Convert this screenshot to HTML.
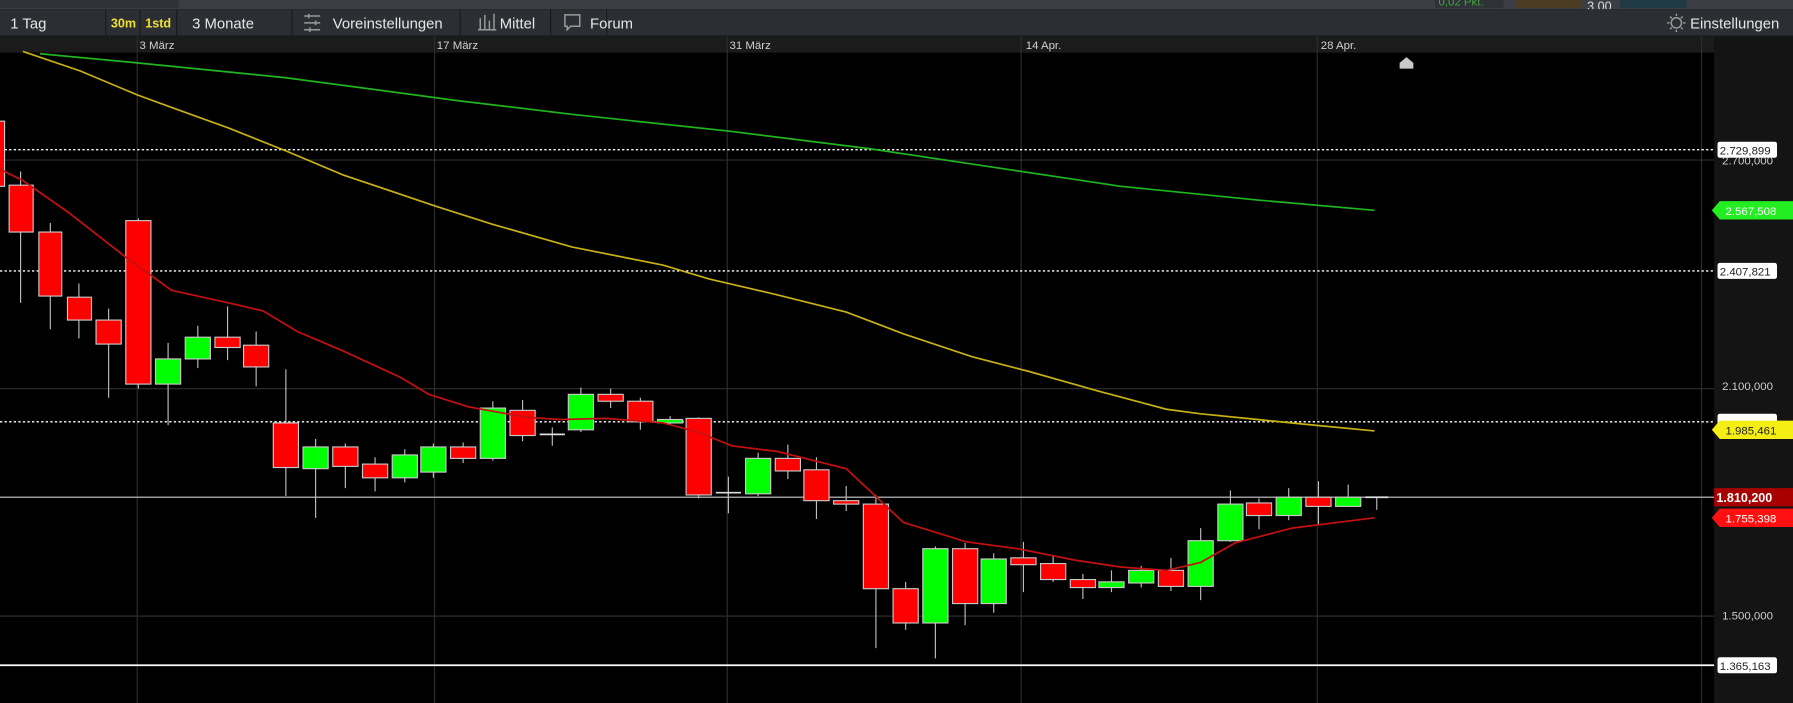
<!DOCTYPE html>
<html><head><meta charset="utf-8"><style>
html,body{margin:0;padding:0;background:#000;overflow:hidden}
svg{display:block}
text{font-family:"Liberation Sans",sans-serif}
</style></head><body>
<svg width="1793" height="703" viewBox="0 0 1568 615" preserveAspectRatio="none" xmlns="http://www.w3.org/2000/svg">
<rect x="0" y="0" width="1568" height="615" fill="#000"/>
<rect x="0" y="0" width="1568" height="8" fill="#3b3f45"/>
<rect x="0" y="0" width="156" height="7" fill="#2f3237"/>
<rect x="1255" y="0" width="60" height="7" fill="#2f3237"/>
<text x="1258" y="5" font-size="10" fill="#3ea83e">0,02 Pkt.</text>
<rect x="1325" y="0" width="58" height="7" fill="#4b3c24"/>
<text x="1388" y="9" font-size="11" fill="#ddd">3,00</text>
<rect x="1417" y="0" width="58" height="7" fill="#1f3a44"/>
<rect x="0" y="8" width="1568" height="24" fill="#2b2e32"/>
<rect x="0" y="31" width="1568" height="1" fill="#1a1b1d"/>
<g fill="#1a1b1d">
<rect x="92" y="8" width="1" height="23"/><rect x="122" y="8" width="1" height="23"/><rect x="154" y="8" width="1" height="23"/>
<rect x="255" y="8" width="1" height="23"/><rect x="402" y="8" width="1" height="23"/><rect x="481" y="8" width="1" height="23"/><rect x="530" y="8" width="1" height="23"/>
</g>
<g font-size="13" fill="#e6e6e6">
<text x="9" y="25">1 Tag</text>
<text x="97" y="24" font-size="11" font-weight="bold" fill="#f0e030">30m</text>
<text x="127" y="24" font-size="11" font-weight="bold" fill="#f0e030">1std</text>
<text x="168" y="25">3 Monate</text>
<text x="291" y="25">Voreinstellungen</text>
<text x="437" y="25">Mittel</text>
<text x="516" y="25">Forum</text>
<text x="1478" y="25">Einstellungen</text>
</g>
<g stroke="#9a9a9a" stroke-width="1.3" fill="none">
<path d="M266 14h14M266 20h14M266 26h14M270 12v4M276 18v4M271 24v4"/>
<path d="M420 16v10M424 13v13M428 18v8M432 12v14M418 26h16"/>
<path d="M494 13h13v10h-8l-3 3v-3h-2z"/>
<circle cx="1466" cy="20" r="4.5"/>
<path d="M1466 12v2M1466 26v2M1458 20h2M1472 20h2M1460.5 14.5l1.5 1.5M1470 24l1.5 1.5M1471.5 14.5l-1.5 1.5M1462 24l-1.5 1.5"/>
</g>
<rect x="0" y="32" width="1568" height="14" fill="#1b1b1b"/>
<g font-size="10" fill="#d0d0d0">
<text x="122" y="43">3 März</text><text x="382" y="43">17 März</text><text x="638" y="43">31 März</text><text x="897" y="43">14 Apr.</text><text x="1155" y="43">28 Apr.</text>
</g>
<rect x="1499" y="32" width="69" height="583" fill="#141414"/>
<g stroke="#2e2e2e" stroke-width="1">
<path d="M120 32V615M380 32V615M636 32V615M893 32V615M1152 32V615M1488 32V615"/>
<path d="M0 140H1499M0 340H1499M0 539H1499"/>
</g>
<path d="M1224 60v-5l6-5 6 5v5z" fill="#c8c8c8"/>
<g stroke="#fff" stroke-width="1.2" stroke-dasharray="2,2">
<path d="M0 131H1499M0 237H1499M0 369H1499"/>
</g>
<path d="M0 435H1499" stroke="#9a9a9a" stroke-width="1.3"/>
<path d="M0 582H1499" stroke="#fff" stroke-width="1.5"/>
<polyline fill="none" stroke="#1fb51f" stroke-width="1.5" points="35,47 120,55 250,68 400,88 500,100 640,115 760,130 880,148 980,163 1100,175 1202,184"/>
<polyline fill="none" stroke="#c8b015" stroke-width="1.5" points="20,45 70,62 120,83 150,94 200,112 250,132 300,153 380,180 430,196 500,216 580,232 620,244 680,258 740,273 790,292 850,312 900,325 960,342 1020,358 1050,362 1090,366 1140,371 1202,377"/>
<g stroke="#bdbdbd" stroke-width="1">
<path d="M-3 90V170M18 150V265M44 195V288M69 248V296M95 270V348M121 191V340M147 300V372M173 285V322M199 268V315M224 290V338M250 323V434M276 384V453M302 388V427M328 400V430M354 393V422M379 388V418M405 387V405M431 351V403M457 350V386M483 374V390M508 339V378M534 340V357M560 348V376M586 364V372M611 365V436M637 417V449M663 396V434M689 389V419M714 400V454M740 425V447M766 433V567M792 509V551M818 478V576M844 475V547M869 484V536M895 474V518M921 486V509M947 502V524M972 499V518M998 495V514M1024 488V517M1050 462V525M1076 429V474M1101 436V463M1127 427V455M1153 421V459M1179 424V442M1204 435V446"/>
</g>
<g stroke="#c8c8c8" stroke-width="1">
<g fill="#ff0000">
<rect x="-10" y="106" width="14" height="57"/>
<rect x="8" y="162" width="21" height="41"/>
<rect x="34" y="203" width="20" height="56"/>
<rect x="59" y="260" width="21" height="20"/>
<rect x="84" y="280" width="22" height="21"/>
<rect x="110" y="193" width="22" height="143"/>
<rect x="188" y="295" width="22" height="9"/>
<rect x="213" y="302" width="22" height="19"/>
<rect x="239" y="370" width="22" height="39"/>
<rect x="291" y="391" width="22" height="17"/>
<rect x="317" y="406" width="22" height="12"/>
<rect x="394" y="391" width="22" height="10"/>
<rect x="446" y="359" width="22" height="22"/>
<rect x="523" y="345" width="22" height="6"/>
<rect x="549" y="351" width="22" height="18"/>
<rect x="600" y="366" width="22" height="67"/>
<rect x="678" y="401" width="22" height="11"/>
<rect x="703" y="411" width="22" height="27"/>
<rect x="729" y="438" width="22" height="3"/>
<rect x="755" y="441" width="22" height="74"/>
<rect x="781" y="515" width="22" height="30"/>
<rect x="833" y="480" width="22" height="48"/>
<rect x="884" y="488" width="22" height="6"/>
<rect x="910" y="493" width="22" height="14"/>
<rect x="936" y="507" width="22" height="7"/>
<rect x="1013" y="499" width="22" height="14"/>
<rect x="1090" y="440" width="22" height="11"/>
<rect x="1142" y="435" width="22" height="8"/>
</g>
<g fill="#00ff00">
<rect x="136" y="314" width="22" height="22"/>
<rect x="162" y="295" width="22" height="19"/>
<rect x="265" y="391" width="22" height="19"/>
<rect x="343" y="398" width="22" height="20"/>
<rect x="368" y="391" width="22" height="22"/>
<rect x="420" y="357" width="22" height="44"/>
<rect x="497" y="345" width="22" height="31"/>
<rect x="575" y="367" width="22" height="3"/>
<rect x="652" y="401" width="22" height="31"/>
<rect x="807" y="480" width="22" height="65"/>
<rect x="858" y="489" width="22" height="39"/>
<rect x="961" y="509" width="22" height="5"/>
<rect x="987" y="499" width="22" height="11"/>
<rect x="1039" y="473" width="22" height="40"/>
<rect x="1065" y="441" width="22" height="32"/>
<rect x="1116" y="435" width="22" height="16"/>
<rect x="1168" y="435" width="22" height="8"/>
</g>
<path d="M472 380H494M626 431H648M1194 435H1214" stroke="#ddd" stroke-width="1.5"/>
</g>
<polyline fill="none" stroke="#c41010" stroke-width="1.5" points="0,148 20,158 60,186 110,225 150,254 200,265 230,272 260,290 300,307 350,330 375,345 410,356 460,365 490,367 530,366 580,370 610,378 640,390 680,395 740,410 790,457 845,474 890,480 940,490 980,496 1020,499 1050,492 1080,475 1130,462 1202,453"/>
<g font-size="10">
<rect x="1502" y="124" width="52" height="14" rx="2" fill="#fff"/>
<text x="1504" y="135" fill="#222">2.729,899</text>
<text x="1506" y="144" fill="#ccc">2.700,000</text>
<path d="M1497 184l7-8h64v16h-64z" fill="#22ee22"/>
<text x="1509" y="188" fill="#fff">2.567,508</text>
<rect x="1502" y="230" width="52" height="14" rx="2" fill="#fff"/>
<text x="1504" y="241" fill="#222">2.407,821</text>
<text x="1506" y="341" fill="#ccc">2.100,000</text>
<rect x="1502" y="362" width="52" height="12" rx="2" fill="#fff"/>
<path d="M1497 376l7-8h64v16h-64z" fill="#f5ee14"/>
<text x="1509" y="380" fill="#222">1.985,461</text>
<rect x="1499" y="427" width="69" height="16" fill="#a80000"/>
<text x="1501" y="439" fill="#fff" font-weight="bold" font-size="11">1.810,200</text>
<path d="M1497 453l7-8h64v16h-64z" fill="#ff1010"/>
<text x="1509" y="457" fill="#fff">1.755,398</text>
<text x="1506" y="542" fill="#ccc">1.500,000</text>
<rect x="1502" y="575" width="52" height="14" rx="2" fill="#fff"/>
<text x="1504" y="586" fill="#222">1.365,163</text>
</g>
</svg>
</body></html>
